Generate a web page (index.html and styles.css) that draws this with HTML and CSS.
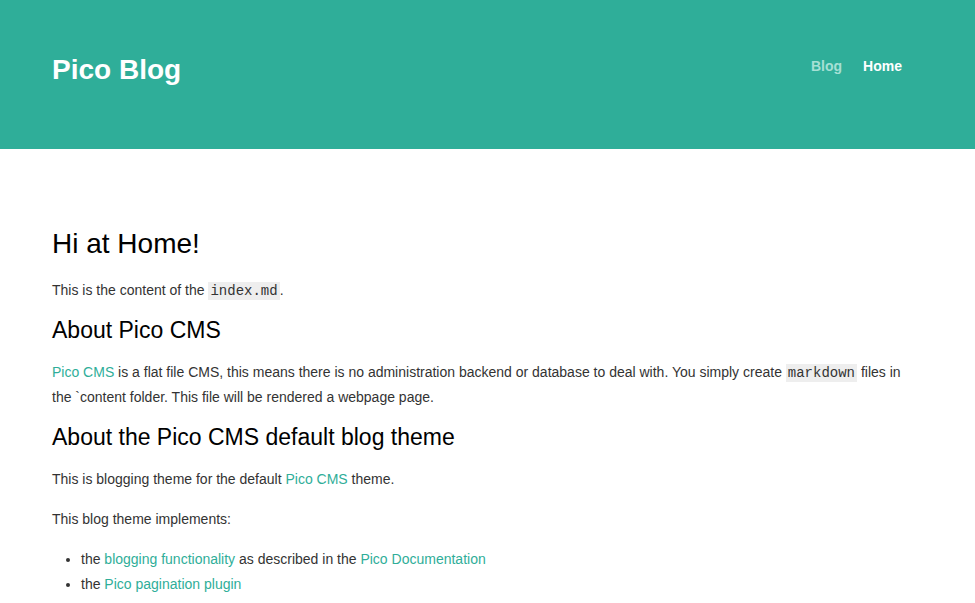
FILE: index.html
```html
<!DOCTYPE html>
<html>
<head>
<meta charset="utf-8">
<link rel="stylesheet" href="styles.css">
</head>
<body>
<header class="header">
  <div class="header-inner">
    <a class="logo" href="#">Pico Blog</a>
    <nav class="nav">
      <a class="nav-link" href="#">Blog</a>
      <a class="nav-link active" href="#">Home</a>
    </nav>
  </div>
</header>
<main class="main">
  <h1>Hi at Home!</h1>
  <p>This is the content of the <code>index.md</code>.</p>
  <h2>About Pico CMS</h2>
  <p><a href="#">Pico CMS</a> is a flat file CMS, this means there is no administration backend or database to deal with. You simply create <code>markdown</code> files in the `content folder. This file will be rendered a webpage page.</p>
  <h2>About the Pico CMS default blog theme</h2>
  <p>This is blogging theme for the default <a href="#">Pico CMS</a> theme.</p>
  <p>This blog theme implements:</p>
  <ul>
    <li>the <a href="#">blogging functionality</a> as described in the <a href="#">Pico Documentation</a></li>
    <li>the <a href="#">Pico pagination plugin</a></li>
  </ul>
</main>
</body>
</html>
```
FILE: styles.css
```css
* { box-sizing: border-box; }
body {
  margin: 0;
  font-family: "Liberation Sans", Arial, sans-serif;
  font-size: 14px;
  color: #333;
  background: #fff;
}
a { color: #2fae99; text-decoration: none; }
.header {
  background: #2fae99;
  height: 149px;
}
.header-inner {
  display: flex;
  justify-content: space-between;
  align-items: flex-start;
  padding: 52px 73px 0 52px;
}
.logo {
  color: #fff;
  font-weight: bold;
  font-size: 28px;
  line-height: 36px;
}
.nav {
  display: flex;
  gap: 21px;
  padding-top: 4px;
}
.nav-link {
  color: #a6e0d5;
  font-weight: bold;
  font-size: 14px;
  line-height: 20px;
}
.nav-link.active { color: #fff; }
.main {
  padding: 78px 53px 0 52px;
}
h1 {
  font-weight: normal;
  font-size: 28px;
  line-height: 34px;
  margin: 0 0 17px;
  color: #000;
}
h2 {
  font-weight: normal;
  font-size: 23px;
  line-height: 24px;
  margin: 15px 0 18px;
  color: #000;
}
p {
  margin: 0 0 15px;
  line-height: 25px;
}
code {
  font-family: "Liberation Mono", "Courier New", monospace;
  font-size: 14px;
  line-height: 1;
  background: #eee;
  padding: 1px 2px;
}
ul {
  margin: 0;
  padding-left: 29px;
}
li { line-height: 25px; color: #333; }
```
